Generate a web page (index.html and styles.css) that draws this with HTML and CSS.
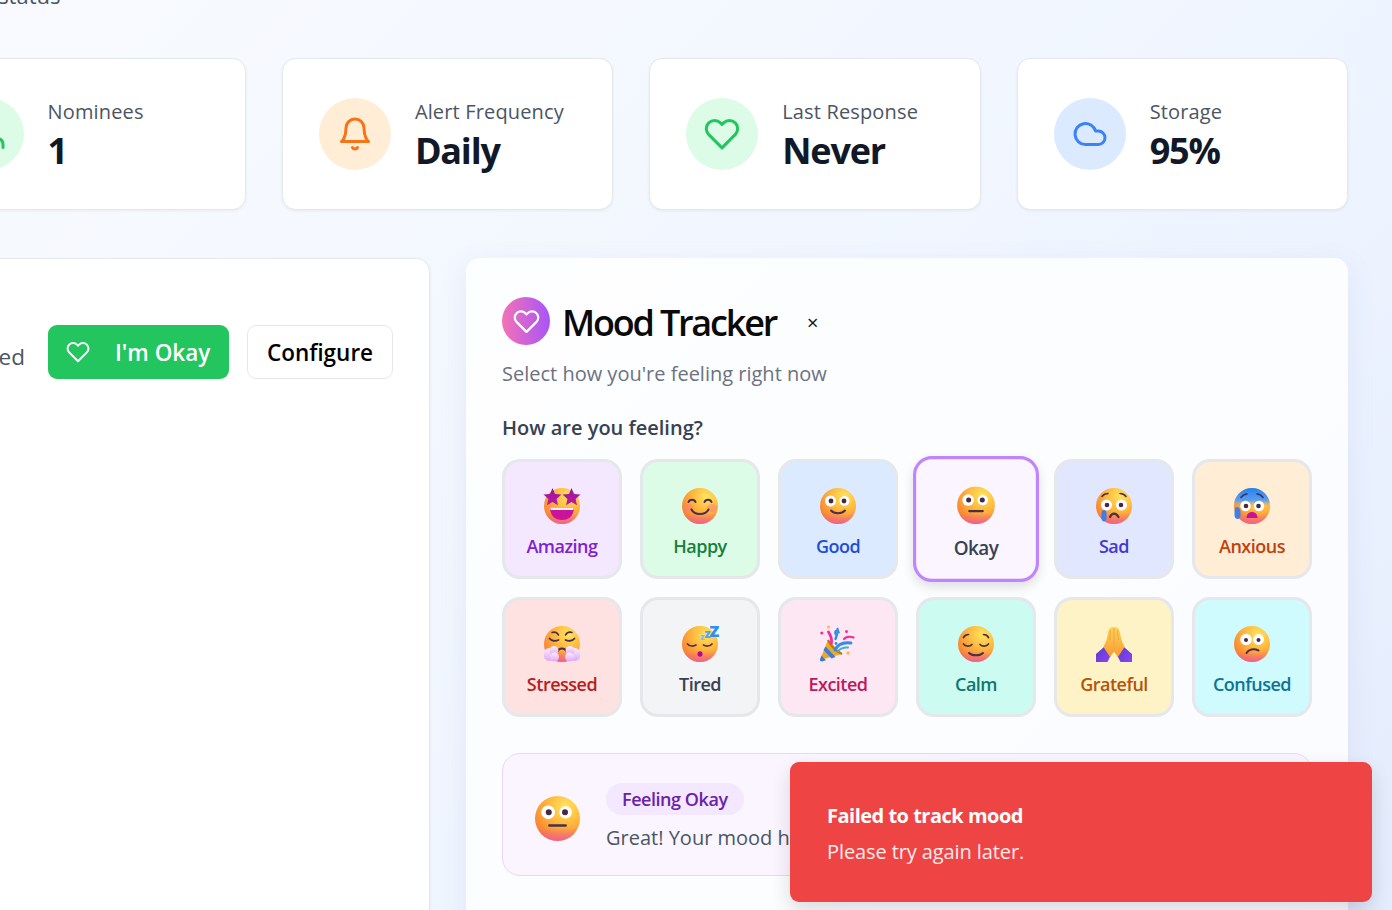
FILE: index.html
```html
<!DOCTYPE html>
<html lang="en">
<head>
<meta charset="utf-8">
<title>Mood Tracker</title>
<link rel="stylesheet" href="styles.css">
</head>
<body>
<svg class="defs" width="0" height="0" aria-hidden="true">
  <defs>
    <radialGradient id="fb" cx="0.68" cy="0.24" r="0.85">
      <stop offset="0" stop-color="#ffe45f"/><stop offset="0.45" stop-color="#ffb93e"/><stop offset="0.85" stop-color="#f98a34"/><stop offset="1" stop-color="#f57a3a"/>
    </radialGradient>
    <linearGradient id="fp" x1="0" y1="0.7" x2="0" y2="1">
      <stop offset="0" stop-color="#f0569e" stop-opacity="0"/><stop offset="1" stop-color="#ee5aa8" stop-opacity="0.8"/>
    </linearGradient>
    <linearGradient id="st" x1="0" y1="0" x2="0" y2="1">
      <stop offset="0" stop-color="#8a1aa5"/><stop offset="1" stop-color="#c9149a"/>
    </linearGradient>
    <linearGradient id="cold" x1="0" y1="0" x2="0" y2="1">
      <stop offset="0" stop-color="#2183f2"/><stop offset="0.34" stop-color="#5c9cf0"/><stop offset="0.56" stop-color="#ffc24a" stop-opacity="0"/>
    </linearGradient>
    <linearGradient id="sl" x1="0" y1="0" x2="1" y2="1">
      <stop offset="0" stop-color="#5c3bc9"/><stop offset="1" stop-color="#8a45f5"/>
    </linearGradient>
    <linearGradient id="hg" x1="0" y1="0" x2="0" y2="1">
      <stop offset="0" stop-color="#ffd356"/><stop offset="1" stop-color="#fb9a2e"/>
    </linearGradient>
    <linearGradient id="cl" x1="0" y1="0" x2="0" y2="1">
      <stop offset="0" stop-color="#fbeffd"/><stop offset="1" stop-color="#e2a6f4"/>
    </linearGradient>
    <symbol id="face" viewBox="0 0 36 36">
      <circle cx="18" cy="18" r="18" fill="url(#fb)"/>
      <circle cx="18" cy="18" r="18" fill="url(#fp)"/>
    </symbol>
    <symbol id="e-amazing" viewBox="0 0 36 36" overflow="visible">
      <use href="#face" width="36" height="36"/>
      <polygon fill="url(#st)" points="8.500,0 11,6 17.500,6.600 12.600,10.900 14,17.200 8.500,13.900 3,17.200 4.400,10.900 -0.500,6.600 6,6"/>
      <polygon fill="url(#st)" points="27.500,0 30,6 36.500,6.600 31.600,10.900 33,17.200 27.500,13.900 22,17.200 23.400,10.900 18.500,6.600 25,6"/>
      <path fill="#c9149a" d="M6 19.500h24c0 8-5 12.500-12 12.500S6 27.500 6 19.500z"/>
      <path fill="#f3edf7" d="M6.200 19.500h23.600c0 1-.2 2-.4 2.500H6.600c-.2-.5-.4-1.500-.4-2.500z"/>
    </symbol>
    <symbol id="e-happy" viewBox="0 0 36 36">
      <use href="#face" width="36" height="36"/>
      <ellipse cx="6" cy="20" rx="5" ry="4" fill="#f77a8a" opacity=".45"/>
      <ellipse cx="30" cy="20" rx="5" ry="4" fill="#f77a8a" opacity=".45"/>
      <g fill="none" stroke="#4a2f4d" stroke-width="2" stroke-linecap="round">
        <path d="M6.500 14c1-3 6-3 7 0"/><path d="M22.500 14c1-3 6-3 7 0"/><path d="M9.500 21.500c3 6 14 6 17 0"/>
      </g>
    </symbol>
    <symbol id="e-good" viewBox="0 0 36 36">
      <use href="#face" width="36" height="36"/>
      <circle cx="10.500" cy="13" r="5.500" fill="#fff"/><circle cx="24.500" cy="13" r="5" fill="#fff"/>
      <circle cx="11" cy="13" r="2.400" fill="#47293f"/><circle cx="24" cy="13" r="2.400" fill="#47293f"/>
      <path d="M11 22.500c3 3.600 11 3.600 14 0" fill="none" stroke="#4a2f4d" stroke-width="2" stroke-linecap="round"/>
    </symbol>
    <symbol id="e-okay" viewBox="0 0 36 36">
      <use href="#face" width="36" height="36"/>
      <circle cx="10.500" cy="13" r="5.500" fill="#fff"/><circle cx="24.500" cy="13" r="5" fill="#fff"/>
      <circle cx="11" cy="13" r="2.400" fill="#47293f"/><circle cx="24" cy="13" r="2.400" fill="#47293f"/>
      <path d="M11.500 23.500h13" fill="none" stroke="#4a2f4d" stroke-width="2" stroke-linecap="round"/>
    </symbol>
    <symbol id="e-sad" viewBox="0 0 36 36">
      <use href="#face" width="36" height="36"/>
      <circle cx="10.500" cy="17" r="5.500" fill="#fff"/><circle cx="25.500" cy="17" r="5.500" fill="#fff"/>
      <circle cx="11" cy="17" r="2.300" fill="#47293f"/><circle cx="25" cy="17" r="2.300" fill="#47293f"/>
      <g fill="none" stroke="#4a2f4d" stroke-width="1.600" stroke-linecap="round">
        <path d="M6 8.500c1.500-2 4-3 6-3"/><path d="M30 8.500c-1.500-2-4-3-6-3"/>
        <path d="M14 29c2-4.500 6-4.500 8.500 0" stroke-width="2.200"/>
      </g>
      <path d="M8 22c2 0 2.500 2 2.500 4v4c0 2-1 3.500-2.500 3.500S5.500 32 5.500 30v-4c0-2 .5-4 2.500-4z" fill="#3f7de8"/>
    </symbol>
    <symbol id="e-anxious" viewBox="0 0 36 36">
      <use href="#face" width="36" height="36"/>
      <circle cx="18" cy="18" r="18" fill="url(#cold)"/>
      <circle cx="11.500" cy="18" r="5.200" fill="#fff"/><circle cx="25" cy="18" r="5.200" fill="#fff"/>
      <circle cx="12" cy="18" r="2.300" fill="#47293f"/><circle cx="24.500" cy="18" r="2.300" fill="#47293f"/>
      <g fill="none" stroke="#3b2f52" stroke-width="1.600" stroke-linecap="round">
        <path d="M7 9.500c1.500-2 4-3.500 6-3.500"/><path d="M29 9.500c-1.500-2-4-3.500-6-3.500"/>
      </g>
      <path d="M12.500 30c0-8 11-8 11 0z" fill="#c9129b"/>
      <path d="M3 19c2.500 0 3.500 3 3.500 5v3c0 2.500-1.500 4-3 4s-3-1.500-3-4v-3c0-2 .5-5 2.500-5z" fill="#3f7de8"/>
    </symbol>
    <symbol id="e-stressed" viewBox="0 0 36 36">
      <use href="#face" width="36" height="36"/>
      <g fill="none" stroke="#4a2f4d" stroke-width="1.500" stroke-linecap="round">
        <path d="M8 6.500c3-1 5 0 6.500 2.500"/><path d="M28 6.500c-3-1-5 0-6.500 2.500"/>
        <path d="M5.500 12.500c2 2.500 6 3 9 1.500" stroke-width="1.800"/><path d="M30.500 12.500c-2 2.500-6 3-9 1.500" stroke-width="1.800"/>
        <path d="M14 25c1-3.500 7-3.500 8 0" stroke-width="2"/>
      </g>
      <g fill="url(#cl)">
        <circle cx="5.500" cy="28.500" r="6.500"/><circle cx="10" cy="24.500" r="4.500"/><circle cx="10.500" cy="31" r="4.500"/>
        <circle cx="30.500" cy="28.500" r="6.500"/><circle cx="26" cy="24.500" r="4.500"/><circle cx="25.500" cy="31" r="4.500"/>
      </g>
    </symbol>
    <symbol id="e-tired" viewBox="0 0 36 36" overflow="visible">
      <use href="#face" width="36" height="36"/>
      <g fill="none" stroke="#4a2f4d" stroke-width="1.700" stroke-linecap="round">
        <path d="M5.500 18c2 2.500 6 2.500 8.500 1"/><path d="M21.500 19c2.500 1.500 6.500 1.500 8.500-1"/>
      </g>
      <ellipse cx="18" cy="28" rx="2.500" ry="2.800" fill="#b0089a"/>
      <text class="zz1" x="18" y="14">z</text><text class="zz2" x="22.500" y="12">z</text><text class="zz3" x="27.500" y="11">Z</text>
    </symbol>
    <symbol id="e-excited" viewBox="0 0 36 36" overflow="visible">
      <path d="M0 34l8-20 14 14z" fill="#e8a92a"/>
      <path d="M5.500 20.500l10 10.500-4 1.500-8-8.500zM1.500 29.500l4.500 4.700-4 1.300c-1.500 0-2.300-1-2-2.300z" fill="#3b7bd9"/>
      <path d="M8 14c3 6 8 11 14 14" fill="none" stroke="#b27a12" stroke-width="2.200"/>
      <g fill="none" stroke-linecap="round">
        <path d="M8.500 6c2 3 3.500 7 3 11" stroke="#f52c9b" stroke-width="2.800"/>
        <path d="M17.500 3c.5 3-.5 6-2 10" stroke="#2e8ee8" stroke-width="2.400"/>
        <path d="M19 6.500a2 2 0 1 0-2 2.200" stroke="#2e8ee8" stroke-width="1.800"/>
        <path d="M15 24c3-6 9-8 16-7" stroke="#2e8ee8" stroke-width="2.800"/>
        <path d="M18 25c3-3 6-4 10-3.500" stroke="#44b0c8" stroke-width="2"/>
        <path d="M24 13c2-2 6-3 9.500-1.500" stroke="#f52c9b" stroke-width="2.200"/>
      </g>
      <circle cx="1.800" cy="7" r="1.600" fill="#f52c9b"/><circle cx="8.500" cy="1" r="1.500" fill="#ffb84d"/>
      <circle cx="26.500" cy="5.500" r="1.500" fill="#f52c9b"/><circle cx="16" cy="17.500" r="1.400" fill="#2e8ee8"/>
      <circle cx="28" cy="27" r="1.700" fill="#ffb84d"/>
    </symbol>
    <symbol id="e-calm" viewBox="0 0 36 36">
      <use href="#face" width="36" height="36"/>
      <g fill="none" stroke="#4a2f4d" stroke-width="1.700" stroke-linecap="round">
        <path d="M5.500 11.500c1-2 3-3 5-3"/><path d="M30.500 11.500c-1-2-3-3-5-3"/>
        <path d="M5.500 18c2 2.800 6.500 2.800 8.500 .5"/><path d="M22 18.500c2 2.300 6.500 2.300 8.500-.5"/>
        <path d="M11 27c3 3 11 3 14 0" stroke-width="2"/>
      </g>
    </symbol>
    <symbol id="e-grateful" viewBox="0 0 36 36">
      <path d="M0 36V28L8 21l6.500 9-3 6z" fill="url(#sl)"/>
      <path d="M36 36V28L28 21l-6.500 9 3 6z" fill="url(#sl)"/>
      <path d="M17.700 1C14 1 12.500 3 12 7l-1.500 7c-1 3-2.500 5-3 7L14 31l3.700-5z" fill="url(#hg)"/>
      <path d="M18.300 1C22 1 23.500 3 24 7l1.500 7c1 3 2.500 5 3 7L22 31l-3.700-5z" fill="url(#hg)"/>
      <path d="M18 2v24" stroke="#e5851f" stroke-width=".8"/>
      <path d="M14.500 4l-.8 10M21.500 4l.8 10" stroke="#ef9f2e" stroke-width=".8" fill="none"/>
    </symbol>
    <symbol id="e-confused" viewBox="0 0 36 36">
      <use href="#face" width="36" height="36"/>
      <circle cx="12" cy="13.500" r="5.800" fill="#fff"/><circle cx="24.500" cy="13.500" r="5.400" fill="#fff"/>
      <circle cx="12" cy="14" r="2" fill="#47293f"/><circle cx="24.500" cy="14" r="2" fill="#47293f"/>
      <path d="M12.500 27c2-3.500 7-5 12-2.500" fill="none" stroke="#4a2f4d" stroke-width="2" stroke-linecap="round"/>
    </symbol>
    <symbol id="i-heart" viewBox="0 0 24 24"><path d="M20.840 4.610a5.500 5.500 0 0 0-7.780 0L12 5.670l-1.060-1.060a5.500 5.500 0 0 0-7.780 7.780l1.060 1.060L12 21.230l7.780-7.780 1.060-1.060a5.500 5.500 0 0 0 0-7.780z"/></symbol>
  </defs>
</svg>

<div class="page">
  <p class="page-note">Check-in status</p>
  <section class="stats">
    <article class="stat">
      <span class="stat-icon tint-green"><svg class="ico" viewBox="0 0 24 24"><path d="M16 21v-2a4 4 0 0 0-4-4H6a4 4 0 0 0-4 4v2"/><circle cx="9" cy="7" r="4"/><path d="M22 21v-2a4 4 0 0 0-3-3.870"/><path d="M16 3.130a4 4 0 0 1 0 7.750"/></svg></span>
      <div><p class="stat-label">Nominees</p><p class="stat-value">1</p></div>
    </article>
    <article class="stat">
      <span class="stat-icon tint-orange"><svg class="ico" viewBox="0 0 24 24"><path d="M6 8a6 6 0 0 1 12 0c0 7 3 9 3 9H3s3-2 3-9"/><path d="M10.300 21a1.940 1.940 0 0 0 3.400 0"/></svg></span>
      <div><p class="stat-label">Alert Frequency</p><p class="stat-value">Daily</p></div>
    </article>
    <article class="stat">
      <span class="stat-icon tint-green"><svg class="ico"><use href="#i-heart"/></svg></span>
      <div><p class="stat-label">Last Response</p><p class="stat-value">Never</p></div>
    </article>
    <article class="stat">
      <span class="stat-icon tint-blue"><svg class="ico" viewBox="0 0 24 24"><path d="M17.500 19H9a7 7 0 1 1 6.710-9h1.790a4.500 4.500 0 1 1 0 9Z"/></svg></span>
      <div><p class="stat-label">Storage</p><p class="stat-value">95%</p></div>
    </article>
  </section>

  <section class="columns">
    <div class="panel">
      <div class="panel-row">
        <span class="panel-note">Not yet confirmed</span>
        <button class="btn btn-green"><svg class="btn-ico"><use href="#i-heart"/></svg>I'm Okay</button>
        <button class="btn btn-plain">Configure</button>
      </div>
    </div>

    <div class="mood">
      <header class="mood-head">
        <span class="mood-badge"><svg class="mood-badge-ico"><use href="#i-heart"/></svg></span>
        <h2 class="mood-title">Mood Tracker</h2>
        <span class="mood-close">×</span>
      </header>
      <p class="mood-sub">Select how you're feeling right now</p>
      <p class="mood-q">How are you feeling?</p>
      <div class="mood-grid">
        <button class="mood-btn m-amazing"><svg class="emo"><use href="#e-amazing"/></svg>Amazing</button>
        <button class="mood-btn m-happy"><svg class="emo"><use href="#e-happy"/></svg>Happy</button>
        <button class="mood-btn m-good"><svg class="emo"><use href="#e-good"/></svg>Good</button>
        <button class="mood-btn m-okay"><svg class="emo"><use href="#e-okay"/></svg>Okay</button>
        <button class="mood-btn m-sad"><svg class="emo"><use href="#e-sad"/></svg>Sad</button>
        <button class="mood-btn m-anxious"><svg class="emo"><use href="#e-anxious"/></svg>Anxious</button>
        <button class="mood-btn m-stressed"><svg class="emo"><use href="#e-stressed"/></svg>Stressed</button>
        <button class="mood-btn m-tired"><svg class="emo"><use href="#e-tired"/></svg>Tired</button>
        <button class="mood-btn m-excited"><svg class="emo"><use href="#e-excited"/></svg>Excited</button>
        <button class="mood-btn m-calm"><svg class="emo"><use href="#e-calm"/></svg>Calm</button>
        <button class="mood-btn m-grateful"><svg class="emo"><use href="#e-grateful"/></svg>Grateful</button>
        <button class="mood-btn m-confused"><svg class="emo"><use href="#e-confused"/></svg>Confused</button>
      </div>
      <div class="feedback">
        <svg class="feedback-emo"><use href="#e-okay"/></svg>
        <div class="feedback-body">
          <span class="feedback-tag">Feeling Okay</span>
          <p class="feedback-text">Great! Your mood has been recorded.</p>
        </div>
      </div>
    </div>
  </section>
</div>

<aside class="toast">
  <p class="toast-title">Failed to track mood</p>
  <p class="toast-text">Please try again later.</p>
</aside>
</body>
</html>
```

FILE: styles.css
```css
* { box-sizing: border-box; }
html, body { height: 100%; }
body {
  margin: 0;
  overflow: hidden;
  position: relative;
  font-family: "Open Sans", "Noto Sans", sans-serif;
  background: linear-gradient(135deg, #f8fafe 0%, #eff5ff 60%, #e4ecfd 100%);
  color: #111827;
}
p, h2 { margin: 0; }
button { font-family: inherit; cursor: pointer; }
.defs { position: absolute; }

.page { width: 1433.500px; margin: -15px 0 0 -85.500px; }
.page-note { height: 20px; margin-bottom: 53px; font-size: 22px; line-height: 20px; color: #4b5563; text-indent: -10px; white-space: nowrap; }

.stats { display: grid; grid-template-columns: repeat(4, 1fr); gap: 36px; }
.stat {
  display: flex; align-items: center; gap: 24px;
  height: 152px; padding: 0 36px;
  background: #fff; border: 1px solid #e5e7eb; border-radius: 13.500px;
  box-shadow: 0 1px 3px rgba(0,0,0,.06);
}
.stat-icon { width: 72px; height: 72px; flex: none; border-radius: 50%; display: flex; align-items: center; justify-content: center; }
.tint-green { background: #dcfce7; color: #22c55e; }
.tint-orange { background: #ffedd5; color: #f97316; }
.tint-blue { background: #dbeafe; color: #3b82f6; }
.ico { width: 36px; height: 36px; fill: none; stroke: currentColor; stroke-width: 2; stroke-linecap: round; stroke-linejoin: round; }
.stat-label { font-size: 20px; line-height: 28px; color: #4b5563; letter-spacing: .15px; }
.stat-value { margin: 2px 0 -2px; font-size: 36px; line-height: 45px; font-weight: 700; color: #111827; letter-spacing: -1.200px; }

.columns { display: grid; grid-template-columns: 515.500px 882px; gap: 36px; margin-top: 48px; align-items: start; }
.panel {
  height: 700px; padding: 66px 36px 0 0;
  background: #fff; border: 1px solid #e5e7eb; border-radius: 13.500px;
  box-shadow: 0 1px 3px rgba(0,0,0,.06);
  overflow: hidden;
}
.panel-row { display: flex; align-items: center; justify-content: flex-end; gap: 18px; }
.panel-note { flex: none; margin: 9px 5px 0 0; font-size: 22.500px; color: #4b5563; white-space: nowrap; }
.btn { flex: none; height: 54px; border-radius: 9px; font-size: 22.500px; font-weight: 600; display: flex; align-items: center; }
.btn-green { width: 181px; padding: 0 0 0 18px; border: 0; background: #22c55e; color: #fff; gap: 25px; }
.btn-ico { width: 24px; height: 24px; fill: none; stroke: #fff; stroke-width: 2; stroke-linecap: round; stroke-linejoin: round; }
.btn-plain { width: 146px; justify-content: center; padding: 0; background: #fff; border: 1px solid #e5e7eb; color: #000; }

.mood {
  height: 700px; padding: 38px 36px 0;
  background: rgba(255,255,255,.8); border-radius: 13.500px;
  box-shadow: 0 8px 28px rgba(120,140,190,.12);
}
.mood-head { display: flex; align-items: center; height: 50px; }
.mood-badge { width: 48px; height: 48px; border-radius: 50%; display: flex; align-items: center; justify-content: center; background: linear-gradient(90deg, #f472b6, #a855f7); }
.mood-badge-ico { width: 27px; height: 27px; fill: none; stroke: #fff; stroke-width: 2; stroke-linecap: round; stroke-linejoin: round; }
.mood-title { position: relative; top: 2px; margin-left: 12px; font-size: 36px; line-height: 50px; font-weight: 600; color: #0a0a0a; letter-spacing: -2.200px; }
.mood-close { position: relative; top: 2px; margin-left: 31px; font-size: 20px; line-height: 1; color: #111; }
.mood-sub { margin-top: 14px; font-size: 20px; line-height: 28px; color: #6b7280; }
.mood-q { margin-top: 26px; font-size: 20px; line-height: 28px; font-weight: 600; color: #374151; }

.mood-grid { display: grid; grid-template-columns: repeat(6, 120px); gap: 18px; margin-top: 17px; }
.mood-btn {
  height: 120px; padding: 8px 0 0;
  display: flex; flex-direction: column; align-items: center; justify-content: center; gap: 10px;
  border: 3px solid #e5e7eb; border-radius: 18px;
  font-size: 18px; line-height: 24px; font-weight: 600; letter-spacing: -.5px;
}
.emo { width: 36px; height: 36px; overflow: visible; flex: none; }
.zz1, .zz2, .zz3 { font-family: "Open Sans", sans-serif; font-weight: 800; }
.zz1 { font-size: 9px; fill: #7cc0f5; }
.zz2 { font-size: 12px; fill: #4ba6f5; }
.zz3 { font-size: 16px; fill: #2e8ff0; }

.m-amazing { background: #f3e8ff; color: #7e22ce; }
.m-happy { background: #dcfce7; color: #15803d; }
.m-good { background: #dbeafe; color: #1d4ed8; }
.m-okay { background: #faf5ff; color: #374151; border-color: #c084fc; transform: scale(1.05); box-shadow: 0 4px 10px rgba(0,0,0,.12); }
.m-sad { background: #e0e7ff; color: #4338ca; }
.m-anxious { background: #ffedd5; color: #c2410c; }
.m-stressed { background: #fee2e2; color: #b91c1c; }
.m-tired { background: #f3f4f6; color: #374151; }
.m-excited { background: #fce7f3; color: #be185d; }
.m-calm { background: #ccfbf1; color: #0f766e; }
.m-grateful { background: #fef3c7; color: #b45309; }
.m-confused { background: #cffafe; color: #0e7490; }

.feedback {
  display: flex; align-items: center; gap: 26px;
  height: 123px; margin-top: 36px; padding: 0 32px;
  background: #faf5ff; border: 1px solid #e9d5ff; border-radius: 18px;
}
.feedback-emo { width: 45px; height: 45px; flex: none; margin-top: 8px; }
.feedback-body { margin-top: 5px; }
.feedback-tag { display: inline-block; height: 32px; padding: 0 16px; border-radius: 16px; background: #f3e8ff; color: #6b21a8; font-size: 18px; line-height: 32px; font-weight: 600; letter-spacing: -.45px; }
.feedback-text { margin-top: 9px; font-size: 20px; line-height: 28px; color: #4b5563; white-space: nowrap; }

.toast {
  position: absolute; right: 20px; bottom: 8px;
  width: 582px; height: 140px; padding: 36px 37px;
  background: #ef4444; border-radius: 9px; color: #fff;
  box-shadow: 0 8px 20px rgba(0,0,0,.14);
}
.toast-title { font-size: 20px; line-height: 36px; font-weight: 700; letter-spacing: -.5px; }
.toast-text { font-size: 20px; line-height: 36px; opacity: .9; letter-spacing: -.1px; }
```
